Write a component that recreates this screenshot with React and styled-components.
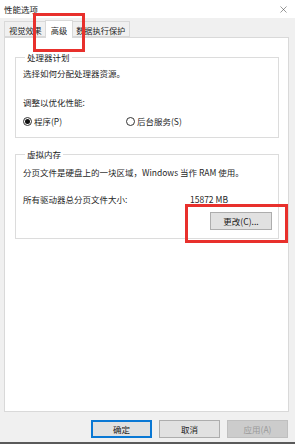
import React from 'react'
import styled, { createGlobalStyle } from 'styled-components'
import { X } from 'lucide-react'

const GlobalStyle = createGlobalStyle`
  html, body {
    margin: 0;
    padding: 0;
    background: #f0f0f0;
  }
  body {
    font-family: "Noto Sans CJK SC", "Noto Sans", sans-serif;
    font-size: 8.5px;
    color: #1f1f1f;
  }
`

const App = () => {
  return (
    <Window>
      <GlobalStyle />
      <TitleBar>
        <Title>性能选项</Title>
        <X size={11} strokeWidth={1.2} color="#444" />
      </TitleBar>

      <TabStrip>
        <Tab>视觉效果</Tab>
        <Marked>
          <Tab active>高级</Tab>
        </Marked>
        <Tab>数据执行保护</Tab>
      </TabStrip>

      <Panel>
        <Group top={13}>
          <Legend>处理器计划</Legend>
          <Line gap={4}>选择如何分配处理器资源。</Line>
          <Line gap={17}>调整以优化性能:</Line>
          <RadioRow>
            <RadioItem>
              <Radio checked />
              程序(P)
            </RadioItem>
            <RadioItem>
              <Radio />
              后台服务(S)
            </RadioItem>
          </RadioRow>
        </Group>

        <Group top={10} bottom={8}>
          <Legend>虚拟内存</Legend>
          <Line gap={6}>分页文件是硬盘上的一块区域，Windows 当作 RAM 使用。</Line>
          <SizeRow>
            <span>所有驱动器总分页文件大小:</span>
            <span>15872 MB</span>
          </SizeRow>
          <ButtonRow>
            <MarkedButton>
              <Button>更改(C)...</Button>
            </MarkedButton>
          </ButtonRow>
        </Group>
      </Panel>

      <Footer>
        <Button primary wide>确定</Button>
        <Button wide>取消</Button>
        <Button wide disabled>应用(A)</Button>
      </Footer>
    </Window>
  )
}

export default App

const Window = styled.div`
width: 295px;
height: 444px;
box-sizing: border-box;
display: flex;
flex-direction: column;
border-bottom: 2px solid #5a5a5a;
overflow: hidden;
`

const TitleBar = styled.div`
height: 18px;
background: #fff;
display: flex;
align-items: center;
justify-content: space-between;
padding: 0 6px 0 4px;
`

const Title = styled.span`
font-size: 8.5px;
color: #222;
`

const TabStrip = styled.div`
height: 19px;
display: flex;
align-items: flex-end;
padding-left: 4px;
`

const Tab = styled.div`
height: ${p => (p.active ? '18px' : '16px')};
box-sizing: border-box;
padding: 1px ${p => (p.active ? '5px' : '4px')} 0;
margin: 0 ${p => (p.active ? '-2px' : '0')} ${p => (p.active ? '-1px' : '0')};
display: flex;
align-items: center;
font-size: 8.2px;
border: 1px solid #d9d9d9;
border-bottom: ${p => (p.active ? 'none' : '1px solid #d9d9d9')};
background: ${p => (p.active ? '#fff' : '#f0f0f0')};
position: relative;
z-index: ${p => (p.active ? 2 : 1)};
white-space: nowrap;
`

const Marked = styled.div`
position: relative;
z-index: 3;
display: flex;
&::after {
  content: '';
  position: absolute;
  left: -14px;
  right: -14px;
  top: -7px;
  bottom: -15px;
  border: 3px solid #e8302c;
  pointer-events: none;
}
`

const Panel = styled.div`
height: 375px;
box-sizing: border-box;
margin: 0 6px 0 4px;
background: #fff;
border: 1px solid #d9d9d9;
padding: 0 9px 0 10px;
display: flex;
flex-direction: column;
`

const Group = styled.fieldset`
margin: ${p => p.top}px 0 0;
padding: 0 6px ${p => (p.bottom != null ? p.bottom : 10)}px 7px;
border: 1px solid #dcdcdc;
min-width: 0;
`

const Legend = styled.legend`
padding: 0 2px;
margin-left: 2px;
line-height: 12px;
color: #222;
`

const Line = styled.div`
margin-top: ${p => p.gap}px;
line-height: 12px;
white-space: nowrap;
`

const RadioRow = styled.div`
margin-top: 7px;
display: grid;
grid-template-columns: 103px auto;
line-height: 12px;
`

const RadioItem = styled.label`
display: flex;
align-items: center;
gap: 2px;
`

const Radio = styled.span`
width: 9px;
height: 9px;
box-sizing: border-box;
border-radius: 50%;
border: 1px solid #333;
display: inline-flex;
align-items: center;
justify-content: center;
&::after {
  content: '';
  width: 5px;
  height: 5px;
  border-radius: 50%;
  background: ${p => (p.checked ? '#111' : 'transparent')};
}
`

const SizeRow = styled.div`
margin-top: 15px;
display: grid;
grid-template-columns: 167px auto;
line-height: 12px;
`

const ButtonRow = styled.div`
margin-top: 7px;
display: flex;
justify-content: flex-end;
`

const MarkedButton = styled.div`
position: relative;
display: flex;
&::after {
  content: '';
  position: absolute;
  left: -25px;
  right: -16px;
  top: -8px;
  bottom: -13px;
  border: 3px solid #e8302c;
  pointer-events: none;
}
`

const Button = styled.button`
width: ${p => (p.wide ? '61px' : '62px')};
height: 18px;
box-sizing: border-box;
padding: 0;
font-family: inherit;
font-size: 8.5px;
color: ${p => (p.disabled ? '#9a9a9a' : '#1a1a1a')};
background: ${p => (p.disabled ? '#cccccc' : '#e1e1e1')};
border: ${p => (p.primary ? '2px solid #0a78d4' : p.disabled ? '1px solid #bfbfbf' : '1px solid #adadad')};
`

const Footer = styled.div`
margin-top: 8px;
display: flex;
justify-content: flex-end;
gap: 7px;
padding-right: 7px;
`
